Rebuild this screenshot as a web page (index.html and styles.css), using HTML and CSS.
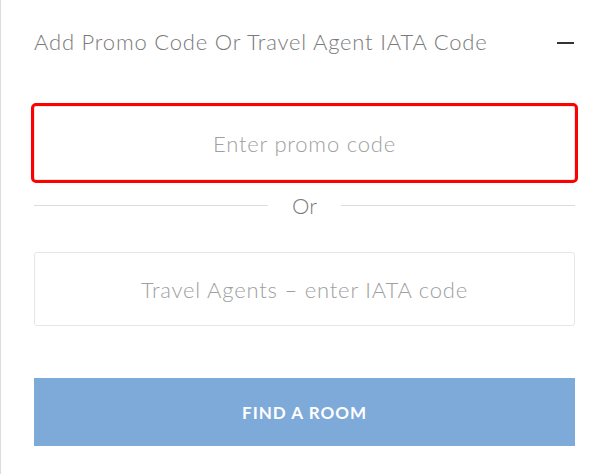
FILE: index.html
```html
<!DOCTYPE html>
<html lang="en">
<head>
    <meta charset="UTF-8">
    <meta name="viewport" content="width=device-width, initial-scale=1.0">
    <title>Promo Code</title>
    <link rel="stylesheet" href="styles.css">
</head>
<body>
    <div class="panel">
        <div class="panel-header">
            <span class="panel-title">Add Promo Code Or Travel Agent IATA Code</span>
            <span class="collapse-icon"></span>
        </div>
        <form class="code-form">
            <input type="text" class="code-input code-input-error" placeholder="Enter promo code">
            <div class="divider"><span>Or</span></div>
            <input type="text" class="code-input iata-input" placeholder="Travel Agents – enter IATA code">
            <button type="button" class="find-button">Find a room</button>
        </form>
    </div>
</body>
</html>
```

FILE: styles.css
```css
:root {
    --text-color: #7a7a7a;
    --placeholder-color: #a0a0a0;
    --border-color: #e6e6e6;
    --line-color: #dcdcdc;
    --error-color: #ff0000;
    --button-color: #7eaad9;
}
* {
    margin: 0;
    padding: 0;
    box-sizing: border-box;
}
body {
    font-family: Lato, 'Open Sans', sans-serif;
    font-weight: 300;
    background-color: #ffffff;
    color: var(--text-color);
}
.panel {
    min-height: 474px;
    border-left: 1px solid #dddddd;
    padding: 0 32px 0 33px;
}
.panel-header {
    display: flex;
    justify-content: space-between;
    align-items: center;
    height: 86px;
}
.panel-title {
    padding-bottom: 4px;
    font-size: 22px;
    letter-spacing: 0.8px;
    color: var(--text-color);
}
.collapse-icon {
    width: 17px;
    height: 2px;
    margin-right: 1px;
    background-color: #333333;
}
.code-form {
    display: flex;
    flex-direction: column;
}
.code-input {
    width: 100%;
    height: 74px;
    font-family: inherit;
    font-weight: 300;
    font-size: 22px;
    letter-spacing: 0.8px;
    text-align: center;
    color: #555555;
    background: #ffffff;
    border: 1px solid var(--border-color);
    border-radius: 3px;
    outline: none;
}
.code-input::placeholder {
    color: var(--placeholder-color);
}
.code-input-error {
    margin-top: 20px;
    border-radius: 2px;
    outline: 3px solid var(--error-color);
}
.divider {
    display: flex;
    align-items: center;
    gap: 24px;
    height: 24px;
    margin-top: 13px;
    font-size: 22px;
    color: var(--text-color);
}
.divider::before, .divider::after {
    content: '';
    flex: 1;
    height: 1px;
    background-color: var(--line-color);
}
.iata-input {
    margin-top: 35px;
}
.find-button {
    height: 68px;
    margin-top: 52px;
    font-family: inherit;
    font-weight: 700;
    font-size: 17px;
    letter-spacing: 1px;
    text-transform: uppercase;
    color: #ffffff;
    background-color: var(--button-color);
    border: none;
    cursor: pointer;
}
```
